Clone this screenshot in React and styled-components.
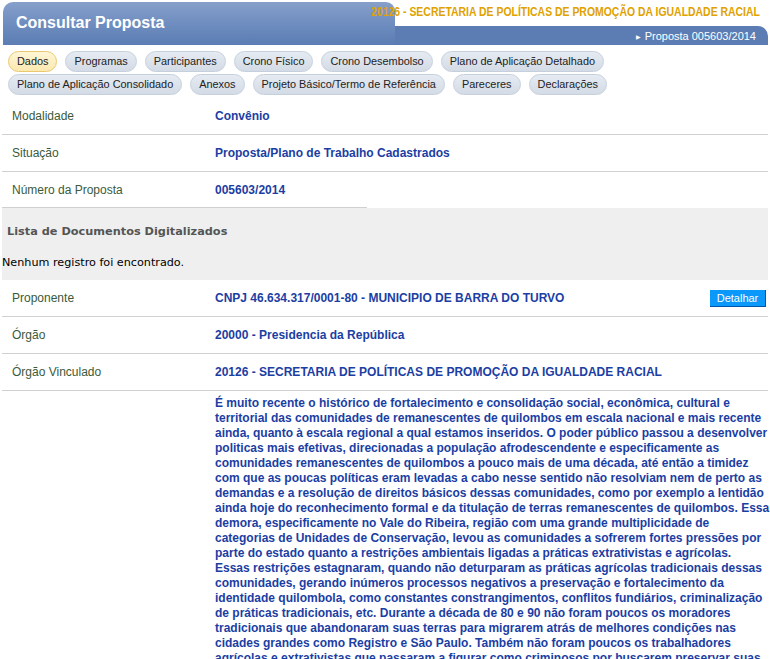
import React from 'react'
import styled, { createGlobalStyle } from 'styled-components';

const Global = createGlobalStyle`
    body {
        margin: 0;
        background: #fff;
        font-family: "Liberation Sans", Arial, sans-serif;
    }
`

const Page = styled.div`
    padding: 2px 2px 0 2px;
    overflow: hidden;
    height: 657px;
`

const Header = styled.div`
    display: grid;
    grid-template-columns: 392px 1fr;
    grid-template-rows: 24px 19px;
    margin: 0 0 0 1px;
`
const TitleTab = styled.div`
    grid-column: 1;
    grid-row: 1 / 3;
    z-index: 1;
    border-radius: 10px 9px 0 0;
    background: linear-gradient(to bottom, #87a0ca 0%, #6f8dc0 50%, #5b7db3 100%);
    color: #fff;
    font-size: 16px;
    font-weight: bold;
    padding: 12px 0 0 13px;
    box-sizing: border-box;
`
const OrgName = styled.div`
    grid-column: 1 / 3;
    grid-row: 1;
    z-index: 2;
    display: flex;
    justify-content: flex-end;
    align-items: flex-start;
    padding: 3px 8px 0 0;
    white-space: nowrap;
    span {
        display: block;
        color: #e0a200;
        font-size: 12px;
        line-height: 14px;
        font-weight: bold;
        transform: scaleX(0.87);
        transform-origin: right center;
    }
`
const Bar = styled.div`
    grid-column: 1 / 3;
    grid-row: 2;
    background: #5b7db3;
    border-top-right-radius: 10px;
    color: #fff;
    font-size: 11px;
    text-align: right;
    padding: 4px 12px 0 0;
    box-sizing: border-box;
`
const Arrow = styled.span`
    font-size: 6px;
    margin-right: 4px;
    vertical-align: 1px;
`

const Tabs = styled.div`
    display: flex;
    flex-wrap: wrap;
    gap: 2px 8px;
    padding: 6px 150px 3px 6px;
`
const Tab = styled.div`
    height: 19px;
    line-height: 19px;
    padding: 0 8px;
    border-radius: 11px;
    font-size: 10.9px;
    color: #222;
    border: 1px solid ${p => p.$active ? '#e9c870' : '#c6d0dc'};
    background: ${p => p.$active
        ? 'linear-gradient(to bottom, #fff6d6, #fbe9b0)'
        : 'linear-gradient(to bottom, #e6ebf2, #d3dbe6)'};
`

const Row = styled.div`
    display: grid;
    grid-template-columns: 213px 1fr auto;
    align-items: ${p => p.$top ? 'start' : 'center'};
    min-height: 36px;
    border-bottom: ${p => p.$noline ? 'none' : '1px solid #d0d0d0'};
    font-size: 12px;
`
const Label = styled.div`
    padding-left: 10px;
    color: #3b5a3a;
`
const Value = styled.div`
    color: #1b3ea3;
    font-weight: bold;
`
const Text = styled.div`
    color: #1b3ea3;
    font-weight: bold;
    line-height: 15px;
    padding-top: 5px;
    white-space: nowrap;
    span { display: block; }
`
const Button = styled.button`
    width: 56px;
    height: 17px;
    padding: 0;
    margin-right: 2px;
    font-family: "Liberation Sans", Arial, sans-serif;
    font-size: 11px;
    color: #fff;
    background: #0a98fb;
    border: none;
    border-right: 1px solid #0055aa;
    border-bottom: 1px solid #0055aa;
`

const Docs = styled.div`
    background: #efefef;
    height: 72px;
    position: relative;
    font-family: "DejaVu Sans", Verdana, sans-serif;
    &::before {
        content: '';
        position: absolute;
        top: -1px;
        left: 0;
        width: 365px;
        border-top: 1px solid #d0d0d0;
    }
`
const DocsTitle = styled.div`
    font-size: 11.3px;
    font-weight: bold;
    color: #555;
    padding: 17px 0 0 5px;
`
const DocsEmpty = styled.div`
    font-size: 11.2px;
    color: #000;
    padding-top: 18px;
`

const lines = [
    'É muito recente o histórico de fortalecimento e consolidação social, econômica, cultural e',
    'territorial das comunidades de remanescentes de quilombos em escala nacional e mais recente',
    'ainda, quanto à escala regional a qual estamos inseridos. O poder público passou a desenvolver',
    'politicas mais efetivas, direcionadas a população afrodescendente e especificamente as',
    'comunidades remanescentes de quilombos a pouco mais de uma década, até então a timidez',
    'com que as poucas políticas eram levadas a cabo nesse sentido não resolviam nem de perto as',
    'demandas e a resolução de direitos básicos dessas comunidades, como por exemplo a lentidão',
    'ainda hoje do reconhecimento formal e da titulação de terras remanescentes de quilombos. Essa',
    'demora, especificamente no Vale do Ribeira, região com uma grande multiplicidade de',
    'categorias de Unidades de Conservação, levou as comunidades a sofrerem fortes pressões por',
    'parte do estado quanto a restrições ambientais ligadas a práticas extrativistas e agrícolas.',
    'Essas restrições estagnaram, quando não deturparam as práticas agrícolas tradicionais dessas',
    'comunidades, gerando inúmeros processos negativos a preservação e fortalecimento da',
    'identidade quilombola, como constantes constrangimentos, conflitos fundiários, criminalização',
    'de práticas tradicionais, etc. Durante a década de 80 e 90 não foram poucos os moradores',
    'tradicionais que abandonaram suas terras para migrarem atrás de melhores condições nas',
    'cidades grandes como Registro e São Paulo. Também não foram poucos os trabalhadores',
    'agrícolas e extrativistas que passaram a figurar como criminosos por buscarem preservar suas',
    'práticas tradicionais de manejo dos recursos naturais.',
]

const tabs1 = ['Dados', 'Programas', 'Participantes', 'Crono Físico', 'Crono Desembolso', 'Plano de Aplicação Detalhado']
const tabs2 = ['Plano de Aplicação Consolidado', 'Anexos', 'Projeto Básico/Termo de Referência', 'Pareceres', 'Declarações']

const App = () => {
  return (
    <Page>
        <Global />
        <Header>
            <TitleTab>Consultar Proposta</TitleTab>
            <OrgName><span>20126 - SECRETARIA DE POLÍTICAS DE PROMOÇÃO DA IGUALDADE RACIAL</span></OrgName>
            <Bar><Arrow>▶</Arrow>Proposta 005603/2014</Bar>
        </Header>
        <Tabs>
            {tabs1.concat(tabs2).map(t => <Tab key={t} $active={t === 'Dados'}>{t}</Tab>)}
        </Tabs>
        <Row>
            <Label>Modalidade</Label>
            <Value>Convênio</Value>
        </Row>
        <Row>
            <Label>Situação</Label>
            <Value>Proposta/Plano de Trabalho Cadastrados</Value>
        </Row>
        <Row $noline>
            <Label>Número da Proposta</Label>
            <Value>005603/2014</Value>
        </Row>
        <Docs>
            <DocsTitle>Lista de Documentos Digitalizados</DocsTitle>
            <DocsEmpty>Nenhum registro foi encontrado.</DocsEmpty>
        </Docs>
        <Row>
            <Label>Proponente</Label>
            <Value>CNPJ 46.634.317/0001-80 - MUNICIPIO DE BARRA DO TURVO</Value>
            <Button>Detalhar</Button>
        </Row>
        <Row>
            <Label>Órgão</Label>
            <Value>20000 - Presidencia da República</Value>
        </Row>
        <Row>
            <Label>Órgão Vinculado</Label>
            <Value>20126 - SECRETARIA DE POLÍTICAS DE PROMOÇÃO DA IGUALDADE RACIAL</Value>
        </Row>
        <Row $top $noline>
            <Label></Label>
            <Text>{lines.map((l, i) => <span key={i}>{l}</span>)}</Text>
        </Row>
    </Page>
  )
}
export default App;
